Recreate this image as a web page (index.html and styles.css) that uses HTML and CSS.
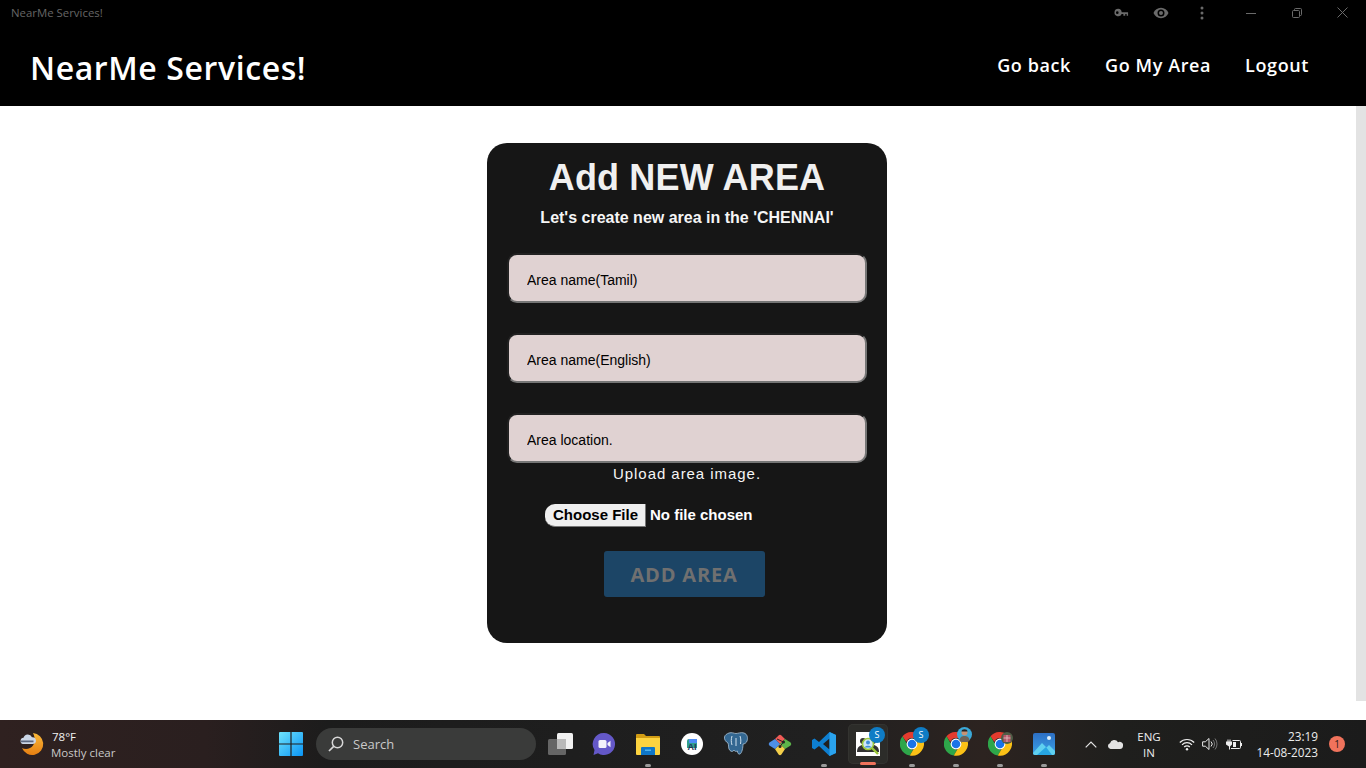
FILE: index.html
```html
<!DOCTYPE html>
<html lang="en">
<head>
<meta charset="utf-8">
<title>NearMe Services!</title>
<link rel="stylesheet" href="styles.css">
</head>
<body>
<div class="app">
  <div class="titlebar">
    <span class="app-title">NearMe Services!</span>
    <div class="title-actions">
      <svg class="ta ta-key" viewBox="0 0 16 10" width="15" height="10"><path d="M4.500.5a4 4 0 1 0 3.700 5.500H10v2h2V6h1.500v2H15V4.200H8.200A4 4 0 0 0 4.500.5zM3.500 3.200a1.400 1.400 0 1 1 0 2.800 1.400 1.400 0 0 1 0-2.800z" fill="#6a6a6a" fill-rule="evenodd"/></svg>
      <svg class="ta ta-eye" viewBox="0 0 16 12" width="16" height="12"><path d="M8 .8C4.600.8 1.700 2.900.5 6c1.200 3.100 4.100 5.200 7.500 5.200s6.300-2.100 7.500-5.200C14.300 2.900 11.400.8 8 .8zm0 8.700A3.500 3.500 0 1 1 8 2.500a3.500 3.500 0 0 1 0 7zm0-5.500a2 2 0 1 0 0 4 2 2 0 0 0 0-4z" fill="#6a6a6a"/></svg>
      <svg class="ta ta-dots" viewBox="0 0 4 14" width="4" height="14"><circle cx="2" cy="2" r="1.500" fill="#6a6a6a"/><circle cx="2" cy="7" r="1.500" fill="#6a6a6a"/><circle cx="2" cy="12" r="1.500" fill="#6a6a6a"/></svg>
      <svg class="ta ta-min" viewBox="0 0 10 10" width="10" height="10"><path d="M0 5.500h10" stroke="#6a6a6a" fill="none"/></svg>
      <svg class="ta ta-max" viewBox="0 0 10 10" width="10" height="10"><path d="M.5 3.500a1 1 0 0 1 1-1h5a1 1 0 0 1 1 1v5a1 1 0 0 1-1 1h-5a1 1 0 0 1-1-1zM2.500 2.500v-1a1 1 0 0 1 1-1h5a1 1 0 0 1 1 1v5a1 1 0 0 1-1 1h-1" stroke="#6a6a6a" fill="none"/></svg>
      <svg class="ta ta-close" viewBox="0 0 11 11" width="11" height="11"><path d="M.5.500l10 10M10.500.500l-10 10" stroke="#6a6a6a" fill="none"/></svg>
    </div>
  </div>
  <header class="navbar">
    <a class="brand" href="#">NearMe Services!</a>
    <nav class="nav-links">
      <a href="#">Go back</a>
      <a href="#">Go My Area</a>
      <a href="#">Logout</a>
    </nav>
  </header>
  <main class="content">
    <div class="page">
      <form class="card">
        <h1>Add NEW AREA</h1>
        <p class="sub">Let's create new area in the 'CHENNAI'</p>
        <input class="field" type="text" placeholder="Area name(Tamil)">
        <input class="field" type="text" placeholder="Area name(English)">
        <input class="field field-last" type="text" placeholder="Area location.">
        <label class="upload-label">Upload area image.</label>
        <input class="file" type="file">
        <button class="submit" type="button">ADD AREA</button>
      </form>
    </div>
    <div class="scrollbar"></div>
  </main>
  <footer class="taskbar">
    <div class="weather">
      <svg viewBox="0 0 26 26" width="26" height="26"><defs><linearGradient id="moon" x1="0" y1="0" x2="0" y2="1"><stop offset="0" stop-color="#f9b93a"/><stop offset="1" stop-color="#e67f12"/></linearGradient></defs><path d="M14 2a11 11 0 1 1-11 15c2 1 5 1.500 8 0 5-2.500 6-9 3-15z" fill="url(#moon)"/><path d="M4 13a3.200 3.200 0 0 1 .5-6.300 4.500 4.500 0 0 1 8.500-.5 3.400 3.400 0 0 1 1 6.800z" fill="#cbd6e6"/><path d="M1.500 9.500h13v1.800H2z" fill="#5b6780"/></svg>
      <div class="weather-text"><span class="temp">78°F</span><span class="cond">Mostly clear</span></div>
    </div>
    <div class="center">
      <div class="slot">
        <svg viewBox="0 0 24 24" width="24" height="24"><defs><linearGradient id="win" x1="0" y1="0" x2="1" y2="1"><stop offset="0" stop-color="#6fe3fb"/><stop offset="1" stop-color="#0a94f5"/></linearGradient></defs><path d="M0 1a1 1 0 0 1 1-1h10.400v11.400H0zM12.600 0H23a1 1 0 0 1 1 1v10.400H12.600zM0 12.600h11.400V24H1a1 1 0 0 1-1-1zM12.600 12.600H24V23a1 1 0 0 1-1 1H12.600z" fill="url(#win)"/></svg>
      </div>
      <div class="search">
        <svg viewBox="0 0 16 16" width="16" height="16"><circle cx="9.500" cy="6.500" r="5.200" stroke="#d8d8d8" stroke-width="1.500" fill="none"/><path d="M5.700 10.300L1 15" stroke="#d8d8d8" stroke-width="1.700" fill="none"/></svg>
        <span>Search</span>
      </div>
      <div class="slot">
        <svg viewBox="0 0 25 24" width="25" height="24"><rect x="9" y="1" width="16" height="16" rx="1.500" fill="#f1f1f1"/><rect x="0" y="7" width="18" height="16" rx="1.500" fill="#6b6b6b" fill-opacity=".92"/><rect x="9" y="7" width="9" height="10" fill="#b9b9b9"/></svg>
      </div>
      <div class="slot">
        <svg viewBox="0 0 24 24" width="24" height="24"><path d="M12 1a11 11 0 1 1-6 20.200L1.500 23l1-5A11 11 0 0 1 12 1z" fill="#6458c8"/><rect x="6.500" y="8" width="8" height="8" rx="1.500" fill="#f3f1fb"/><path d="M15.500 11l3-2.200v6.400l-3-2.200z" fill="#f3f1fb"/></svg>
      </div>
      <div class="slot on">
        <svg viewBox="0 0 24 22" width="24" height="22"><path d="M0 2a1 1 0 0 1 1-1h7l2 2h13a1 1 0 0 1 1 1v4H0z" fill="#d19c14"/><path d="M0 5h24v16a1 1 0 0 1-1 1H1a1 1 0 0 1-1-1z" fill="#fcd340"/><path d="M5 15a1 1 0 0 1 1-1h12a1 1 0 0 1 1 1v7H5z" fill="#0f76c7"/><rect x="9" y="16.500" width="6" height="1.500" fill="#4fb3f0"/></svg>
        <i class="pip"></i>
      </div>
      <div class="slot">
        <svg viewBox="0 0 22 22" width="22" height="22"><circle cx="11" cy="11" r="11" fill="#fff"/><path d="M6 8a2 2 0 0 1 2-2h6a2 2 0 0 1 2 2v7H6z" fill="#2f9e8f"/><path d="M8 6h8v4H8z" fill="#4c8bf5"/><text x="11" y="17" class="ai-text">AI</text></svg>
      </div>
      <div class="slot">
        <svg viewBox="0 0 24 24" width="24" height="24"><path d="M5 1c3-1 5 .5 7 .5S17 0 20 1c3.500 1.200 4 5 3 8-.7 2-2.500 3-4 3 0 3.500-1 9-3 10-1.500.7-2.500-1-2.600-3-1.500.8-3 .3-3.400-1-.7 1.500-2.500 2-4 .5C4 17 5 13 4 11 2 10 0 7.500.5 5 .8 3 3 1.700 5 1z" fill="#336791" stroke="#a9c3d8" stroke-width=".8"/><path d="M8 4c-1 3-1 6 0 9M16 4c1 3 1 5 .5 8M12 6v8" stroke="#cfe0ec" stroke-width="1" fill="none"/></svg>
      </div>
      <div class="slot">
        <svg viewBox="0 0 24 24" width="24" height="24"><path d="M12 12L7 7 10.600 3.400a2 2 0 0 1 2.800 0L17 7z" fill="#ef5b56"/><path d="M12 12l5-5 5.600 3.600a2 2 0 0 1 0 2.800L17 17z" fill="#5db54a"/><path d="M12 12l5 5-3.600 5.600a2 2 0 0 1-2.800 0L7 17z" fill="#f4cf4a"/><path d="M12 12l-5 5-5.600-3.600a2 2 0 0 1 0-2.800L7 7z" fill="#4d8fe8"/><circle cx="15.500" cy="10" r="1.500" fill="#222"/><circle cx="12" cy="14.500" r="1.500" fill="#222"/><path d="M12 14.500L15.500 10M9 7l6.500 3" stroke="#222" fill="none"/></svg>
      </div>
      <div class="slot on">
        <svg viewBox="0 0 24 24" width="24" height="24"><path d="M17.500 0L24 3v18l-6.500 3L7 14l-4.500 3.500L0 16V8l2.500-1.500L7 10zM17.500 6.500L11 12l6.500 5.500z" fill="#0e7fd1"/><path d="M17.500 0L24 3v18l-6.500 3z" fill="#2aa3ee"/></svg>
        <i class="pip"></i>
      </div>
      <div class="slot active">
        <div class="active-bg"></div>
        <div class="appicon">
          <svg viewBox="0 0 24 24" width="24" height="24"><rect width="24" height="24" fill="#fff"/><circle cx="7" cy="9" r="3" fill="#333"/><path d="M1 20c0-5 3-7 6-7s6 2 6 7z" fill="#333"/><circle cx="17" cy="9" r="3" fill="#333"/><path d="M11 20c0-5 3-7 6-7s6 2 6 7z" fill="#333"/><circle cx="12" cy="12" r="5.500" fill="#cfe6f8" stroke="#9cc93a" stroke-width="1.600"/><circle cx="12" cy="10.500" r="2" fill="#3f8ed8"/><path d="M8.500 15.500c1-2.500 6-2.500 7 0z" fill="#3f8ed8"/><path d="M16 16l6 6" stroke="#9cc93a" stroke-width="2.400"/></svg>
          <b class="badge badge-s">S</b>
        </div>
        <i class="pip pip-open"></i>
      </div>
      <div class="slot on">
        <div class="appicon">
          <svg class="chrome" viewBox="0 0 24 24" width="24" height="24"><use href="#chrome-mark"/></svg>
          <b class="badge badge-s">S</b>
        </div>
        <i class="pip"></i>
      </div>
      <div class="slot on">
        <div class="appicon">
          <svg class="chrome" viewBox="0 0 24 24" width="24" height="24"><use href="#chrome-mark"/></svg>
          <svg class="avatar" viewBox="0 0 15 15" width="15" height="15"><circle cx="7.500" cy="7.500" r="7.500" fill="#3ba9d8"/><circle cx="7.500" cy="5.500" r="3" fill="#c89274"/><path d="M4.500 4.500c0-3 6-3 6 0z" fill="#222"/><path d="M2.500 14c0-4 2.500-5 5-5s5 1 5 5l-2.500 1h-5z" fill="#6d6258"/></svg>
        </div>
        <i class="pip"></i>
      </div>
      <div class="slot on">
        <div class="appicon">
          <svg class="chrome" viewBox="0 0 24 24" width="24" height="24"><use href="#chrome-mark"/></svg>
          <svg class="avatar avatar-sm" viewBox="0 0 12 12" width="12" height="12"><circle cx="6" cy="6" r="6" fill="#4f5c46"/><rect x="2.500" y="3" width="7" height="7" fill="#b5586a"/><path d="M2.500 6h7M6 3v7" stroke="#e4c4c4" stroke-width=".8"/></svg>
        </div>
        <i class="pip"></i>
      </div>
      <div class="slot on">
        <svg viewBox="0 0 22 22" width="22" height="22"><defs><linearGradient id="pho" x1="0" y1="0" x2="0" y2="1"><stop offset="0" stop-color="#2d6fc4"/><stop offset="1" stop-color="#3aa2e8"/></linearGradient></defs><rect width="22" height="22" rx="2" fill="url(#pho)"/><circle cx="16" cy="5" r="2" fill="#dff0fb"/><path d="M0 20L9 10l4.500 4.500L16 12l6 6v2a2 2 0 0 1-2 2H2a2 2 0 0 1-2-2z" fill="#5fd0f0"/><path d="M4 22l9-8 6 8z" fill="#27a5e2"/></svg>
        <i class="pip"></i>
      </div>
    </div>
    <div class="tray">
      <svg class="t-chev" viewBox="0 0 12 7" width="12" height="7"><path d="M.7 6.300L6 1l5.300 5.300" stroke="#e6e6e6" stroke-width="1.200" fill="none"/></svg>
      <svg class="t-cloud" viewBox="0 0 16 10" width="16" height="10"><path d="M3.500 10A3 3 0 0 1 3 4.200 4.300 4.300 0 0 1 11 3.300 3.400 3.400 0 0 1 16 7c0 2-1.500 3-3 3z" fill="#e2e2e2"/></svg>
      <div class="lang"><span>ENG</span><span>IN</span></div>
      <svg class="t-wifi" viewBox="0 0 16 13" width="16" height="13"><path d="M.8 4.500a10.200 10.200 0 0 1 14.400 0M3 6.800a7 7 0 0 1 10 0M5.200 9a3.900 3.900 0 0 1 5.600 0" stroke="#f0f0f0" stroke-width="1.200" fill="none"/><circle cx="8" cy="11.300" r="1.200" fill="#f0f0f0"/></svg>
      <svg class="t-vol" viewBox="0 0 16 14" width="16" height="14"><path d="M.6 4.800h2.700L7 1.500v11L3.300 9.200H.6z" stroke="#e8e8e8" fill="none"/><path d="M9 4.500a3.500 3.500 0 0 1 0 5" stroke="#e8e8e8" fill="none"/><path d="M11 3a6 6 0 0 1 0 8M13 1.500a8.500 8.500 0 0 1 0 11" stroke="#777" fill="none"/></svg>
      <svg class="t-bat" viewBox="0 0 16 11" width="16" height="11"><path d="M0 2.500h1.500V.5h1v2h1v-2h1v2H6v3L4 7.500v3H3v-3L0 5.500z" fill="#eee"/><path d="M6.500 1.500h7a1 1 0 0 1 1 1v6a1 1 0 0 1-1 1H5" stroke="#eee" fill="none"/><rect x="7" y="3" width="3" height="5" fill="#eee"/><rect x="15" y="4" width="1" height="3" fill="#eee"/></svg>
      <div class="clock"><span>23:19</span><span>14-08-2023</span></div>
      <b class="notif">1</b>
    </div>
  </footer>
</div>
<svg class="defs" width="0" height="0"><defs><g id="chrome-mark"><path d="M12 0a12 12 0 0 1 10.400 6H12a6 6 0 0 0-5.700 4.100L2.500 4.200A12 12 0 0 1 12 0z" fill="#e33b2e"/><path d="M2.500 4.200l5.100 8.900a6 6 0 0 0 5.400 4.800L9.800 23.600A12 12 0 0 1 2.500 4.200z" fill="#2ea64a"/><path d="M22.400 6A12 12 0 0 1 9.800 23.600l5.300-9a6 6 0 0 0 .9-8.600z" fill="#fbc116"/><circle cx="12" cy="12" r="5.400" fill="#fff"/><circle cx="12" cy="12" r="4.300" fill="#1b73e8"/></g></defs></svg>
</body>
</html>
```
FILE: styles.css
```css
* { box-sizing: border-box; }
html, body { margin: 0; padding: 0; height: 100%; overflow: hidden; }
body { font-family: "Liberation Sans", Arial, sans-serif; background: #fff; }
.app { width: 1366px; height: 768px; display: flex; flex-direction: column; }
.defs { display: block; height: 0; }

.titlebar { height: 25px; flex: none; background: #000; display: flex; align-items: center; justify-content: space-between; padding-left: 11px; }
.app-title { font: 400 11.400px "Open Sans", sans-serif; color: #666; }
.title-actions { display: flex; align-items: center; height: 25px; width: 252px; }
.ta { flex: none; }
.ta-eye { margin-left: 24px; }
.ta-dots { margin-left: 31px; }
.ta-min { margin-left: 42px; }
.ta-max { margin-left: 36px; }
.ta-close { margin-left: 35px; }

.navbar { height: 81px; flex: none; background: #000; display: flex; align-items: center; justify-content: space-between; padding: 0 57px 1px 30px; }
.brand { margin-top: 4px; font: 600 32px "Open Sans", sans-serif; color: #fff; text-decoration: none; letter-spacing: .6px; }
.nav-links { display: flex; gap: 34px; }
.nav-links a { font: 600 18px "Open Sans", sans-serif; color: #fff; text-decoration: none; letter-spacing: .6px; }

.content { flex: 1; min-height: 0; display: flex; background: #fff; }
.page { flex: 1; display: flex; justify-content: center; padding-top: 37px; padding-left: 18px; }
.scrollbar { width: 10px; height: 595px; background: #e3e3e3; flex: none; }

.card { width: 400px; height: 500px; background: #161616; border-radius: 20px; display: flex; flex-direction: column; align-items: center; padding: 14px 20px 0; }
.card h1 { margin: 0; font: 700 36px/42px "Liberation Sans", Arial, sans-serif; color: #f0f0f0; letter-spacing: .15px; }
.sub { margin: 10px 0 26px; font: 700 16px/18px "Liberation Sans", Arial, sans-serif; color: #f5f5f5; }
.field { width: 360px; height: 50px; flex: none; margin-bottom: 30px; padding: 4px 18px 0; border: 2px inset #767676; border-radius: 10px; background: #e0d2d2; font: 400 14px "Liberation Sans", Arial, sans-serif; color: #000; outline: none; }
.field::placeholder { color: #000; opacity: 1; }
.field-last { margin-bottom: 0; }
.upload-label { margin-top: 2px; font: 400 15px/18px "Liberation Sans", Arial, sans-serif; color: #f5f5f5; letter-spacing: .95px; }
.file { margin-top: 21px; width: 284px; flex: none; font: 700 15px "Liberation Sans", Arial, sans-serif; color: #fff; }
.file::file-selector-button { font: 700 15px "Liberation Sans", Arial, sans-serif; color: #000; background: #efefef; border: 1px solid #767676; border-width: 0 1px 1px 0; border-radius: 10px 0 0 10px; padding: 2px 7px 3px 8px; height: 23px; margin-right: 4px; }
.submit { margin: 24px 6px 0 0; width: 161px; height: 46px; border: 0; border-radius: 3px; background: #1c4566; color: #707070; font: 700 20px "Open Sans", sans-serif; letter-spacing: .8px; }

.taskbar { height: 48px; flex: none; display: flex; align-items: center; background: linear-gradient(90deg, #2f2120 0%, #2a1f1f 15%, #1c1c1c 24%, #202020 60%, #2c2320 72%, #1f1f1d 82%, #1b1b1b 100%); color: #eee; }
.weather { width: 269px; flex: none; display: flex; align-items: center; padding-left: 19px; gap: 6px; }
.weather-text { display: flex; flex-direction: column; margin-top: 1px; font: 400 11.500px/16px "Open Sans", sans-serif; }
.temp { color: #f2f2f2; margin-left: 1px; }
.cond { color: #c8c8c8; }

.center { display: flex; align-items: center; height: 48px; width: 797px; flex: none; }
.slot { width: 44px; height: 44px; flex: none; display: flex; align-items: center; justify-content: center; position: relative; }
.active-bg { position: absolute; left: 2px; top: 2px; width: 40px; height: 40px; background: #2c2c29; border-radius: 5px; box-shadow: inset 0 0 0 1px #333330; }
.pip { position: absolute; left: 19px; bottom: -1px; width: 6px; height: 3px; border-radius: 2px; background: #9a9a9a; }
.pip-open { left: 14px; width: 16px; background: #f0735c; bottom: 1px; }
.search { width: 220px; height: 32px; margin: 0 2px 0 3px; flex: none; display: flex; align-items: center; gap: 9px; padding-left: 12px; border-radius: 16px; background: #3a3b3a; font: 400 13px "Open Sans", sans-serif; color: #c9c9c9; }
.ai-text { font: 700 9px "Liberation Sans", sans-serif; fill: #1d3557; text-anchor: middle; }
.appicon { position: relative; width: 24px; height: 24px; }
.appicon svg { display: block; }
.badge-s { position: absolute; left: 13px; top: -5px; width: 16px; height: 16px; border-radius: 50%; background: #0f7cc5; color: #fff; font: 400 9px/16px "Open Sans", sans-serif; text-align: center; }
.avatar { position: absolute; left: 13px; top: -5px; }
.avatar-sm { left: 13px; top: 0; }

.tray { flex: 1; min-width: 0; display: flex; align-items: center; height: 48px; font: 400 11.500px/16px "Open Sans", sans-serif; color: #ececec; }
.t-chev { margin-left: 19px; flex: none; }
.t-cloud { margin-left: 10px; flex: none; }
.lang { width: 30px; margin-left: 11px; margin-top: 1px; flex: none; display: flex; flex-direction: column; align-items: center; }
.t-wifi { margin-left: 15px; flex: none; }
.t-vol { margin-left: 7px; flex: none; }
.t-bat { margin-left: 8px; flex: none; }
.clock { width: 75px; margin-left: 1px; flex: none; font-size: 11.800px; display: flex; flex-direction: column; align-items: flex-end; }
.notif { width: 16px; height: 16px; margin-left: 11px; flex: none; border-radius: 50%; background: #f0735c; color: #2a1a18; font: 400 10px/16px "Open Sans", sans-serif; text-align: center; }
```
